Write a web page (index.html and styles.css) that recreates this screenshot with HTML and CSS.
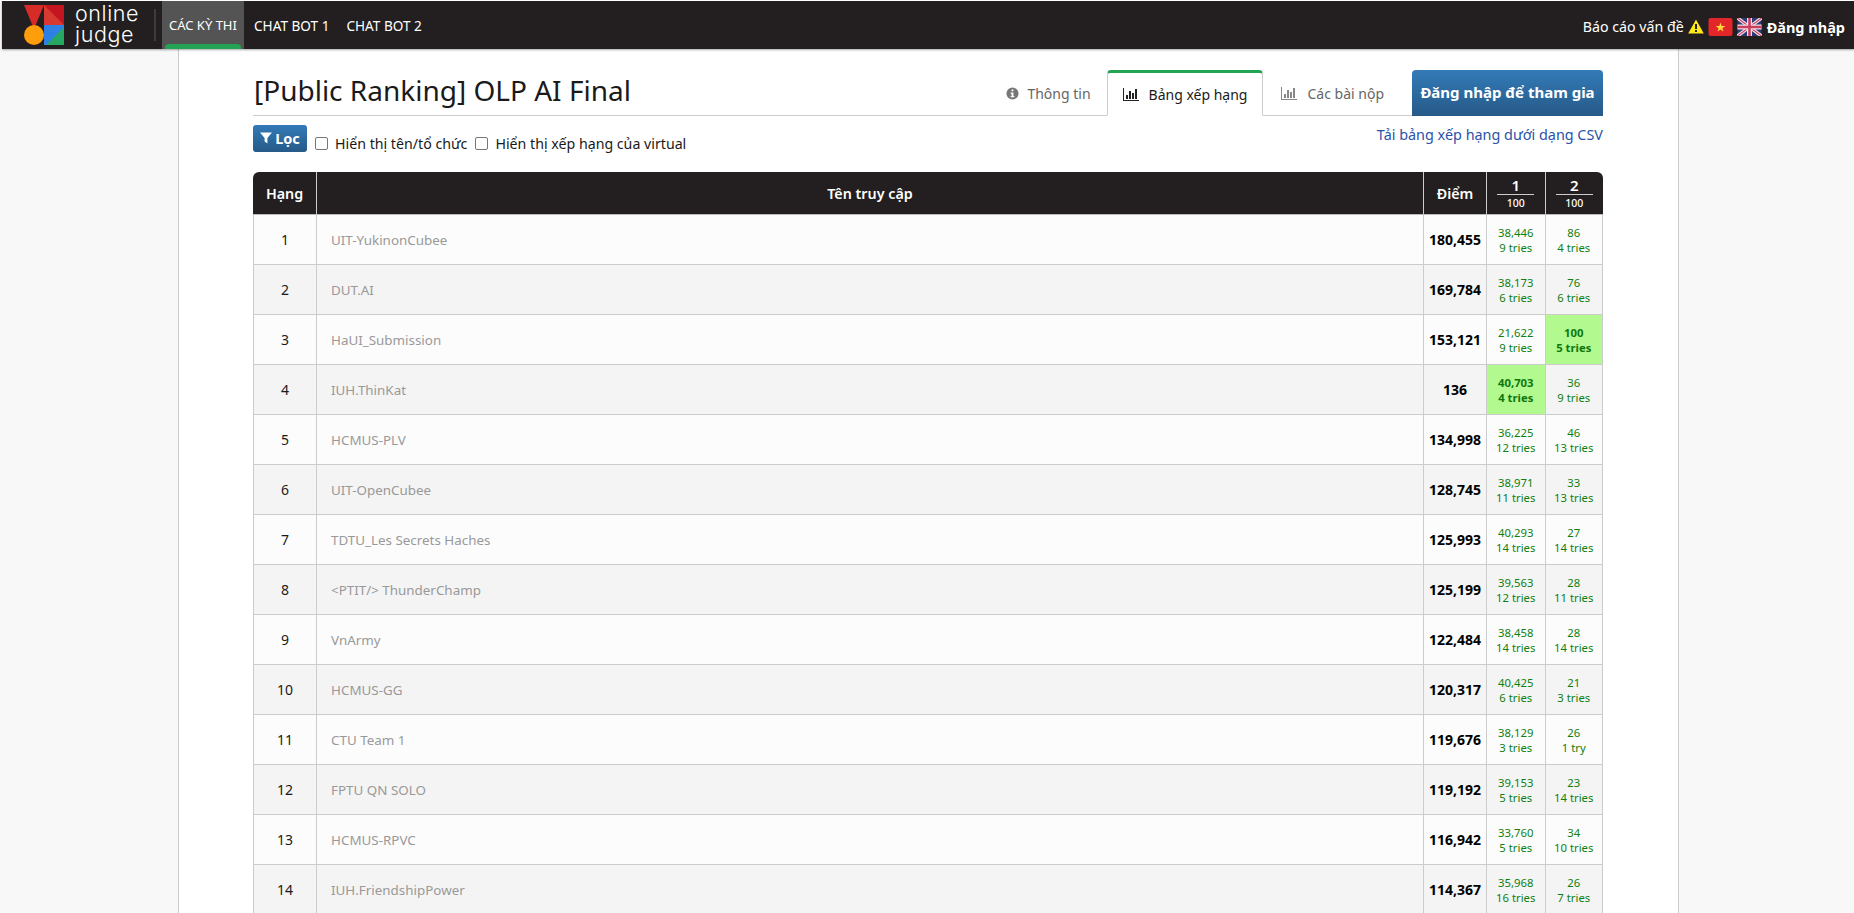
FILE: index.html
```html
<!DOCTYPE html>
<html lang="vi">
<head>
<meta charset="utf-8">
<title>[Public Ranking] OLP AI Final</title>
<link rel="stylesheet" href="styles.css">
</head>
<body>
<nav class="nav">
  <a class="brand">
    <svg class="logo" width="40" height="40" viewBox="0 0 40 40">
      <polygon points="0,0 20,0 10,24" fill="#d62b27"/>
      <polygon points="20,0 40,0 40,20 20,20" fill="#c4161f"/>
      <polygon points="20,0 40,20 20,20" fill="#d83a32"/>
      <polygon points="20,20 40,20 40,40 20,40" fill="#2f80e4"/>
      <polygon points="40,22 40,40 22,40" fill="#24a862"/>
      <path d="M20 30a10 10 0 1 1-20 0a10 10 0 0 1 20 0z" fill="#ff9d0a"/>
    </svg>
    <span class="brand-text">online<br>judge</span>
  </a>
  <span class="sep"></span>
  <a class="nav-item active">CÁC KỲ THI</a>
  <a class="nav-item">CHAT BOT 1</a>
  <a class="nav-item">CHAT BOT 2</a>
  <div class="nav-right">
    <span>Báo cáo vấn đề</span>
    <svg width="16" height="15" viewBox="0 0 16 15"><path d="M8 0.5L15.8 14.5H0.2z" fill="#ffe81a"/><rect x="7" y="5" width="2" height="5" fill="#222"/><rect x="7" y="11" width="2" height="2" fill="#222"/></svg>
    <svg class="flag" width="25" height="18" viewBox="0 0 24 18"><rect width="24" height="18" rx="2" fill="#e2262a"/><polygon points="12,4.5 13.2,8 16.8,8 13.9,10.2 15,13.6 12,11.5 9,13.6 10.1,10.2 7.2,8 10.8,8" fill="#ffd83a"/></svg>
    <svg class="flag" width="25" height="18" viewBox="0 0 24 18"><rect width="24" height="18" fill="#2b3a78"/><path d="M0 0L24 18M24 0L0 18" stroke="#f3dfe6" stroke-width="3.4"/><path d="M0 0L24 18M24 0L0 18" stroke="#c9405f" stroke-width="1.1"/><path d="M12 0V18M0 9H24" stroke="#f3dfe6" stroke-width="5"/><path d="M12 0V18M0 9H24" stroke="#c9405f" stroke-width="2.6"/></svg>
    <a class="login">Đăng nhập</a>
  </div>
</nav>
<main class="page">
  <div class="wrap">
    <header class="title-row">
      <h1 class="title">[Public Ranking] OLP AI Final</h1>
      <div class="tabs">
        <a class="tab tab-info"><svg class="ico info" width="13" height="13" viewBox="0 0 14 14"><path fill-rule="evenodd" d="M7 .5a6.5 6.5 0 1 1 0 13a6.5 6.5 0 0 1 0-13zM6 2.6v2h2v-2zM5 6v1.2h1v2.6H5V11h4V9.8H8V6z" fill="#777"/></svg>Thông tin</a>
        <a class="tab current"><svg class="ico" width="16" height="13" viewBox="0 0 16 13"><path d="M0 0h1v12h15v1H0zM3 7h2v4H3zM6 3h2v8H6zM9 5h2v6H9zM12 1h2v10h-2z" fill="#222"/></svg>Bảng xếp hạng</a>
        <a class="tab tab-subs"><svg class="ico" width="16" height="13" viewBox="0 0 16 13"><path d="M0 0h1v12h15v1H0zM3 7h2v4H3zM6 3h2v8H6zM9 5h2v6H9zM12 1h2v10h-2z" fill="#888"/></svg>Các bài nộp</a>
        <a class="join">Đăng nhập để tham gia</a>
      </div>
    </header>
    <div class="tools">
      <a class="filter"><svg width="12" height="12" viewBox="0 0 12 12"><path d="M0 .5h12L7.4 6v5.5L4.6 9.6V6z" fill="#fff"/></svg>Lọc</a>
      <label class="check"><span class="box"></span>Hiển thị tên/tổ chức</label>
      <label class="check"><span class="box"></span>Hiển thị xếp hạng của virtual</label>
      <a class="csv">Tải bảng xếp hạng dưới dạng CSV</a>
    </div>
    <table class="rank">
      <colgroup><col class="c-rank"><col><col class="c-pts"><col class="c-prob"><col class="c-prob"></colgroup>
      <thead>
        <tr>
          <th>Hạng</th><th>Tên truy cập</th><th>Điểm</th>
          <th class="p"><span class="p-num">1</span><span class="p-max">100</span></th>
          <th class="p"><span class="p-num">2</span><span class="p-max">100</span></th>
        </tr>
      </thead>
      <tbody>
        <tr><td>1</td><td class="u">UIT-YukinonCubee</td><td class="s">180,455</td><td class="r">38,446<br>9 tries</td><td class="r">86<br>4 tries</td></tr>
        <tr><td>2</td><td class="u">DUT.AI</td><td class="s">169,784</td><td class="r">38,173<br>6 tries</td><td class="r">76<br>6 tries</td></tr>
        <tr><td>3</td><td class="u">HaUI_Submission</td><td class="s">153,121</td><td class="r">21,622<br>9 tries</td><td class="r best">100<br>5 tries</td></tr>
        <tr><td>4</td><td class="u">IUH.ThinKat</td><td class="s">136</td><td class="r best">40,703<br>4 tries</td><td class="r">36<br>9 tries</td></tr>
        <tr><td>5</td><td class="u">HCMUS-PLV</td><td class="s">134,998</td><td class="r">36,225<br>12 tries</td><td class="r">46<br>13 tries</td></tr>
        <tr><td>6</td><td class="u">UIT-OpenCubee</td><td class="s">128,745</td><td class="r">38,971<br>11 tries</td><td class="r">33<br>13 tries</td></tr>
        <tr><td>7</td><td class="u">TDTU_Les Secrets Haches</td><td class="s">125,993</td><td class="r">40,293<br>14 tries</td><td class="r">27<br>14 tries</td></tr>
        <tr><td>8</td><td class="u">&lt;PTIT/&gt; ThunderChamp</td><td class="s">125,199</td><td class="r">39,563<br>12 tries</td><td class="r">28<br>11 tries</td></tr>
        <tr><td>9</td><td class="u">VnArmy</td><td class="s">122,484</td><td class="r">38,458<br>14 tries</td><td class="r">28<br>14 tries</td></tr>
        <tr><td>10</td><td class="u">HCMUS-GG</td><td class="s">120,317</td><td class="r">40,425<br>6 tries</td><td class="r">21<br>3 tries</td></tr>
        <tr><td>11</td><td class="u">CTU Team 1</td><td class="s">119,676</td><td class="r">38,129<br>3 tries</td><td class="r">26<br>1 try</td></tr>
        <tr><td>12</td><td class="u">FPTU QN SOLO</td><td class="s">119,192</td><td class="r">39,153<br>5 tries</td><td class="r">23<br>14 tries</td></tr>
        <tr><td>13</td><td class="u">HCMUS-RPVC</td><td class="s">116,942</td><td class="r">33,760<br>5 tries</td><td class="r">34<br>10 tries</td></tr>
        <tr><td>14</td><td class="u">IUH.FriendshipPower</td><td class="s">114,367</td><td class="r">35,968<br>16 tries</td><td class="r">26<br>7 tries</td></tr>
      </tbody>
    </table>
  </div>
</main>
</body>
</html>
```
FILE: styles.css
```css
* { box-sizing: border-box; }
html, body { margin: 0; height: 913px; overflow: hidden; }
body {
  font-family: "Noto Sans", "Open Sans", sans-serif;
  font-size: 14px;
  color: #1a1a1a;
  background: #f8f8f8;
  padding-left: 2px;
}
a { text-decoration: none; color: inherit; }

.nav {
  height: 49px;
  border-top: 1px solid #fff;
  background: #231f20;
  color: #fff;
  display: flex;
  align-items: stretch;
  box-shadow: 0 1px 2px rgba(0,0,0,.35);
  position: relative;
}
.brand { display: flex; align-items: center; padding-left: 22px; width: 152px; }
.logo { flex: none; margin-top: -1px; }
.brand-text {
  font-family: Inter, "Noto Sans", sans-serif;
  font-size: 21.5px;
  line-height: 21px;
  letter-spacing: .6px;
  font-weight: 300;
  margin-left: 11px;
  margin-top: -2px;
}
.sep { width: 2px; height: 32px; background: #3e3b3c; align-self: center; }
.nav-item {
  padding: 0 7px;
  margin-left: 3px;
  font-size: 13.6px;
  display: flex;
  align-items: center;
  position: relative;
}
.nav-item + .nav-item { margin-left: 3px; }
.nav-item.active {
  background: #545454;
  margin-left: 6px;
  margin-right: 0;
  padding: 0 7px;
  width: 82px;
  font-size: 13px;
}
.nav-item.active::after {
  content: "";
  position: absolute;
  left: 3px;
  right: 3px;
  bottom: 0;
  height: 5px;
  background: #23a455;
  border-radius: 4px 4px 0 0;
}
.nav-right {
  margin-left: auto;
  display: flex;
  align-items: center;
  gap: 4px;
  padding-right: 9px;
  padding-top: 3px;
  font-size: 14.2px;
}
.flag { margin-left: 0; }
.login { font-weight: 700; margin-left: 1px; font-size: 14.5px; }

.page {
  width: 1501px;
  margin-left: 176px;
  height: 900px;
  background: #fff;
  border-left: 1px solid #ccc;
  border-right: 1px solid #ccc;
  padding: 0 74px;
}
.wrap { width: 1350px; }

.title-row {
  height: 67px;
  padding-top: 21px;
  display: flex;
  justify-content: space-between;
  align-items: flex-end;
  border-bottom: 1px solid #ccc;
}
.title {
  margin: 0 0 10px 1px;
  font-size: 28px;
  line-height: 30px;
  font-weight: 400;
  color: #1a1a1a;
}
.tabs { display: flex; align-items: flex-end; height: 46px; margin-bottom: -1px; }
.tab {
  height: 46px;
  display: flex;
  align-items: center;
  padding: 0 15px;
  color: #666;
  font-size: 14px;
}
.tab-info { padding-right: 16px; }
.tab-subs { padding: 0 18px 0 16px; }
.tab.current {
  background: #fff;
  color: #1a1a1a;
  border: 1px solid #ccc;
  border-top: 3px solid #23a455;
  border-bottom: 1px solid #fff;
  border-radius: 4px 4px 0 0;
  margin-right: 2px;
}
.ico { margin-right: 10px; }
.ico.info { margin-right: 8px; }
.join {
  margin-left: 10px;
  width: 191px;
  height: 46px;
  display: flex;
  align-items: center;
  justify-content: center;
  padding-bottom: 3px;
  background: linear-gradient(#337ab7, #265a88);
  color: #fff;
  font-weight: 700;
  font-size: 15px;
  border-radius: 4px 4px 0 0;
}

.tools {
  height: 55px;
  display: flex;
  align-items: flex-start;
  padding-top: 9px;
}
.filter {
  width: 54px;
  height: 27px;
  background: linear-gradient(#337ab7, #265a88);
  color: #fff;
  font-weight: 700;
  font-size: 14.5px;
  border-radius: 3px;
  display: flex;
  align-items: center;
  justify-content: center;
  gap: 3px;
  padding-bottom: 2px;
}
.check {
  display: flex;
  align-items: center;
  font-size: 14.2px;
  height: 20px;
  margin: 8px 0 0 8px;
}
.box {
  width: 13px;
  height: 13px;
  border: 1px solid #767676;
  border-radius: 2px;
  background: #fff;
  margin-right: 7px;
}
.csv {
  margin-left: auto;
  color: #2a52a8;
  font-size: 14.4px;
}

.rank {
  width: 1350px;
  table-layout: fixed;
  border-collapse: separate;
  border-spacing: 0;
  font-size: 14px;
  margin-top: 1px;
}
.c-rank { width: 63px; }
.c-pts { width: 63px; }
.c-prob { width: 58.5px; }
.rank th {
  height: 43px;
  background: #231f20;
  color: #fff;
  font-weight: 600;
  font-size: 14.3px;
  border-left: 1px solid #ccc;
  border-bottom: 1px solid #bbb;
  padding: 0;
}
.rank th:first-child { border-left: 0; border-top-left-radius: 6px; }
.rank th:last-child { border-top-right-radius: 6px; }
.p-num {
  display: block;
  width: 37px;
  margin: 0 auto 1px;
  font-size: 15px;
  line-height: 17px;
  border-bottom: 1px solid #ccc;
}
.p-max { display: block; font-size: 10.5px; line-height: 14px; font-weight: 500; }
.rank td {
  height: 50px;
  padding: 0;
  text-align: center;
  color: #1a1a1a;
  background: #fcfcfc;
  border-left: 1px solid #ccc;
  border-bottom: 1px solid #ccc;
}
.rank tr:nth-child(even) td { background: #f4f4f4; }
.rank td:last-child { border-right: 1px solid #ccc; }
.rank .u { text-align: left; padding-left: 14px; color: #999; font-size: 13.4px; }
.rank .s { font-weight: 700; color: #000; font-size: 14px; }
.rank .r { color: #0f7f0f; font-size: 11.3px; line-height: 15px; }
.rank .best, .rank tr:nth-child(even) .best {
  background: #b2f98f;
  color: #0d770d;
  font-weight: 700;
}
```
